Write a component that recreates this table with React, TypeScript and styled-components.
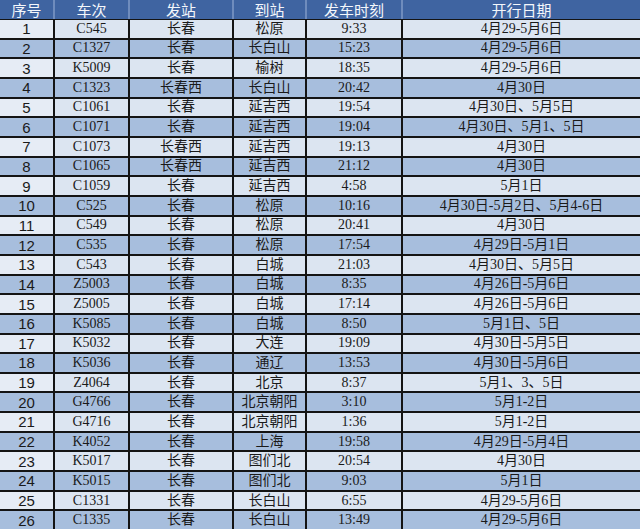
import React from "react";
import styled, { createGlobalStyle } from "styled-components";

const GlobalStyle = createGlobalStyle`
    html, body {
        margin: 0;
        padding: 0;
        background: #ffffff;
    }
`;

const cols = "53px 73px 102px 71px 94px 1fr";

const Sheet = styled.div`
    width: 640px;
    height: 529px;
    display: flex;
    flex-direction: column;
    overflow: hidden;
`;

const HeaderRow = styled.div`
    display: grid;
    grid-template-columns: ${cols};
    column-gap: 2px;
    height: 19px;
    background-color: #6f8cbd;
    flex-shrink: 0;
`;

const HeadCell = styled.div`
    background-color: #3f64a1;
    color: #f4f7fb;
    font-family: "Noto Sans CJK SC", "Noto Sans", sans-serif;
    font-size: 15px;
    line-height: 19px;
    text-align: center;
    white-space: nowrap;
`;

const Body = styled.div`
    flex: 1;
    display: flex;
    flex-direction: column;
    gap: 2px;
    padding-top: 1px;
    background-color: #141414;
`;

const Row = styled.div`
    flex: 1;
    display: grid;
    grid-template-columns: ${cols};
    column-gap: 2px;
`;

const Cell = styled.div<{ $dark: boolean; $font: "num" | "serif" | "cjk"; $first?: boolean }>`
    background-color: ${(p) =>
        p.$dark ? "#a7bedd" : p.$first ? "#e6ecf5" : "#dce5f1"};
    color: #1a1a1a;
    display: flex;
    align-items: center;
    justify-content: center;
    white-space: nowrap;
    font-size: ${(p) => (p.$font === "num" ? "15px" : "14px")};
    font-family: ${(p) =>
        p.$font === "num"
            ? `"Liberation Sans", "Noto Sans", sans-serif`
            : p.$font === "serif"
            ? `"Liberation Serif", "Noto Sans CJK SC", serif`
            : `"Liberation Serif", "Noto Sans CJK SC", sans-serif`};
    line-height: 1;
`;

const headers = ["序号", "车次", "发站", "到站", "发车时刻", "开行日期"];

const trains: [string, string, string, string, string][] = [
    ["C545", "长春", "松原", "9:33", "4月29-5月6日"],
    ["C1327", "长春", "长白山", "15:23", "4月29-5月6日"],
    ["K5009", "长春", "榆树", "18:35", "4月29-5月6日"],
    ["C1323", "长春西", "长白山", "20:42", "4月30日"],
    ["C1061", "长春", "延吉西", "19:54", "4月30日、5月5日"],
    ["C1071", "长春", "延吉西", "19:04", "4月30日、5月1、5日"],
    ["C1073", "长春西", "延吉西", "19:13", "4月30日"],
    ["C1065", "长春西", "延吉西", "21:12", "4月30日"],
    ["C1059", "长春", "延吉西", "4:58", "5月1日"],
    ["C525", "长春", "松原", "10:16", "4月30日-5月2日、5月4-6日"],
    ["C549", "长春", "松原", "20:41", "4月30日"],
    ["C535", "长春", "松原", "17:54", "4月29日-5月1日"],
    ["C543", "长春", "白城", "21:03", "4月30日、5月5日"],
    ["Z5003", "长春", "白城", "8:35", "4月26日-5月6日"],
    ["Z5005", "长春", "白城", "17:14", "4月26日-5月6日"],
    ["K5085", "长春", "白城", "8:50", "5月1日、5日"],
    ["K5032", "长春", "大连", "19:09", "4月30日-5月5日"],
    ["K5036", "长春", "通辽", "13:53", "4月30日-5月6日"],
    ["Z4064", "长春", "北京", "8:37", "5月1、3、5日"],
    ["G4766", "长春", "北京朝阳", "3:10", "5月1-2日"],
    ["G4716", "长春", "北京朝阳", "1:36", "5月1-2日"],
    ["K4052", "长春", "上海", "19:58", "4月29日-5月4日"],
    ["K5017", "长春", "图们北", "20:54", "4月30日"],
    ["K5015", "长春", "图们北", "9:03", "5月1日"],
    ["C1331", "长春", "长白山", "6:55", "4月29-5月6日"],
    ["C1335", "长春", "长白山", "13:49", "4月29-5月6日"],
];

function App() {
    return (
        <>
            <GlobalStyle />
            <Sheet>
                <HeaderRow>
                    {headers.map((h) => (
                        <HeadCell key={h}>{h}</HeadCell>
                    ))}
                </HeaderRow>
                <Body>
                    {trains.map((t, i) => {
                        const dark = i % 2 === 1;
                        return (
                            <Row key={t[0]}>
                                <Cell $dark={dark} $font="num" $first>
                                    {i + 1}
                                </Cell>
                                <Cell $dark={dark} $font="serif">{t[0]}</Cell>
                                <Cell $dark={dark} $font="cjk">{t[1]}</Cell>
                                <Cell $dark={dark} $font="cjk">{t[2]}</Cell>
                                <Cell $dark={dark} $font="serif">{t[3]}</Cell>
                                <Cell $dark={dark} $font="cjk">{t[4]}</Cell>
                            </Row>
                        );
                    })}
                </Body>
            </Sheet>
        </>
    );
}

export default App;
